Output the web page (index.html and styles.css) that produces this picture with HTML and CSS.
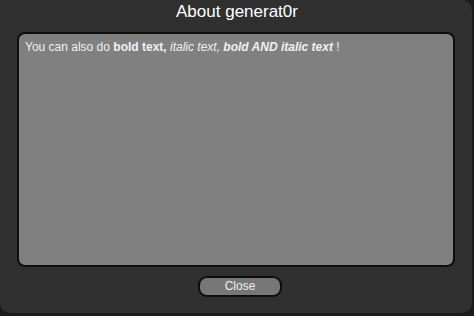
FILE: index.html
```html
<!DOCTYPE html>
<html>
<head>
<meta charset="utf-8">
<link rel="stylesheet" href="styles.css">
</head>
<body>
<div class="dialog">
  <div class="title">About generat0r</div>
  <div class="panel">
    <p class="msg">You can also do <b>bold text,</b> <i>italic text,</i> <b><i>bold AND italic text</i></b> !</p>
  </div>
  <div class="footer">
    <button class="btn">Close</button>
  </div>
</div>
</body>
</html>
```
FILE: styles.css
```css
html, body {
  margin: 0;
  padding: 0;
  background: #1c1c1c;
  width: 474px;
  height: 316px;
  overflow: hidden;
}
.dialog {
  box-sizing: border-box;
  width: 472px;
  height: 313px;
  background: #303030;
  border-radius: 0 10px 10px 10px;
  display: flex;
  flex-direction: column;
  font-family: "Liberation Sans", Arial, sans-serif;
}
.title {
  height: 24px;
  line-height: 24px;
  text-align: center;
  color: #fff;
  font-size: 17px;
  padding-left: 2px;
}
.panel {
  box-sizing: border-box;
  margin: 8px 17px 0 17px;
  height: 235px;
  background: #808080;
  border: 2px solid #0e0e0e;
  border-radius: 8px;
  padding: 6px 6px;
}
.msg {
  margin: 0;
  color: #f0f0f0;
  font-size: 12px;
  line-height: 14px;
}
.footer {
  display: flex;
  justify-content: center;
  padding-top: 9px;
  padding-left: 8px;
}
.btn {
  box-sizing: border-box;
  width: 84px;
  height: 21px;
  background: #777;
  border: 2px solid #0e0e0e;
  border-radius: 9px;
  color: #eee;
  font-family: "Liberation Sans", Arial, sans-serif;
  font-size: 12px;
  padding: 0;
  line-height: 17px;
}
```
